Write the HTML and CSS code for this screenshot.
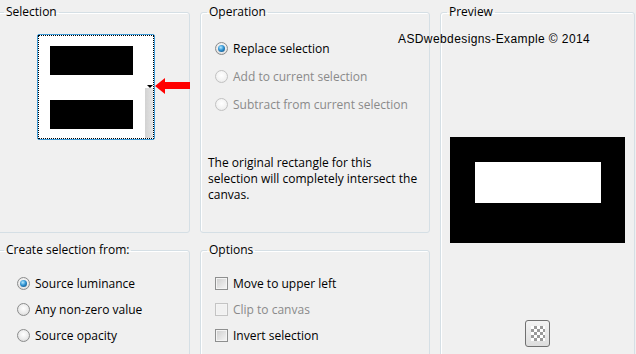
FILE: index.html
```html
<!DOCTYPE html>
<html lang="en">
<head>
    <meta charset="UTF-8">
    <title>Selection from mask</title>
    <link rel="stylesheet" href="styles.css">
</head>
<body>
    <div class="dialog">
        <fieldset class="group selection-group">
            <legend>Selection</legend>
            <div class="thumb">
                <div class="focus">
                    <div class="bars">
                        <div class="bar"></div>
                        <div class="bar"></div>
                    </div>
                    <div class="strip"></div>
                </div>
            </div>
        </fieldset>

        <fieldset class="group operation-group">
            <legend>Operation</legend>
            <div class="options wide">
                <label class="option"><span class="radio checked"></span>Replace selection</label>
                <label class="option disabled"><span class="radio"></span>Add to current selection</label>
                <label class="option disabled"><span class="radio"></span>Subtract from current selection</label>
            </div>
            <p class="note">The original rectangle for this selection will completely intersect the canvas.</p>
        </fieldset>

        <fieldset class="group preview-group">
            <legend>Preview</legend>
            <div class="preview">
                <div class="preview-hole"></div>
            </div>
            <button class="checker-button"><span class="checker"></span></button>
        </fieldset>

        <fieldset class="group source-group">
            <legend>Create selection from:</legend>
            <div class="options">
                <label class="option"><span class="radio checked"></span>Source luminance</label>
                <label class="option"><span class="radio"></span>Any non-zero value</label>
                <label class="option"><span class="radio"></span>Source opacity</label>
            </div>
        </fieldset>

        <fieldset class="group options-group">
            <legend>Options</legend>
            <div class="options">
                <label class="option"><span class="check"></span>Move to upper left</label>
                <label class="option disabled"><span class="check"></span>Clip to canvas</label>
                <label class="option"><span class="check"></span>Invert selection</label>
            </div>
        </fieldset>

        <div class="watermark">ASDwebdesigns-Example &copy; 2014</div>
        <svg class="arrow" width="36" height="17" viewBox="0 0 36 17">
            <polygon points="0,8 10,0 10,4 35,4 35,11 10,11 10,16" fill="#f00"/>
        </svg>
    </div>
</body>
</html>
```

FILE: styles.css
```css
html, body {
    height: 100%;
    overflow: hidden;
}
body {
    margin: 0;
    background-color: #f0f0f0;
    font-family: 'Open Sans', 'Noto Sans', sans-serif;
    font-size: 12px;
    color: #000000;
}
.dialog {
    position: relative;
    display: grid;
    grid-template-columns: 193px 230px 195px;
    grid-template-rows: 229px 140px;
    column-gap: 10px;
    row-gap: 9px;
    margin-left: -3px;
    padding-top: 4px;
}
.group {
    margin: 0;
    padding: 0;
    border: 1px solid #d5dfe5;
    border-radius: 3px;
    box-shadow: inset 1px 1px 0 #ffffff;
    min-width: 0;
}
.group legend {
    margin-left: 6px;
    padding: 0 2px 0 2px;
    line-height: 16px;
}
.preview-group {
    grid-row: 1 / 3;
    grid-column: 3;
    display: flex;
    flex-direction: column;
    align-items: center;
}

/* selection thumbnail */
.thumb {
    width: 118px;
    height: 106px;
    box-sizing: border-box;
    margin: 14px 0 0 39px;
    border: 1px solid #3d9ad6;
    border-radius: 2px;
    background-color: #ffffff;
}
.focus {
    height: 100%;
    box-sizing: border-box;
    border: 1px dotted #000000;
    display: flex;
    padding: 10px 0 0 11px;
}
.bars {
    display: flex;
    flex-direction: column;
    gap: 25px;
}
.bar {
    width: 83px;
    height: 29px;
    background-color: #000000;
}
.strip {
    position: relative;
    align-self: flex-end;
    margin-left: auto;
    width: 8px;
    height: 50px;
    background: linear-gradient(to right, #d2d2d2, #e4e4e4);
}
.strip::before {
    content: "";
    position: absolute;
    top: -3px;
    left: 2px;
    border-left: 3px solid transparent;
    border-right: 3px solid transparent;
    border-top: 3px solid #000000;
}
.arrow {
    position: absolute;
    left: 158px;
    top: 78px;
}

/* radio & check lists */
.options {
    display: flex;
    flex-direction: column;
    padding: 12px 0 0 14px;
}
.source-group .options {
    padding-left: 19px;
}
.options.wide {
    padding-top: 14px;
}
.option {
    display: flex;
    align-items: center;
    height: 26px;
}
.options.wide .option {
    height: 28px;
}
.option.disabled {
    color: #8a8a8a;
}
.radio {
    position: relative;
    width: 13px;
    height: 13px;
    box-sizing: border-box;
    margin-right: 5px;
    border: 1px solid #8b8c8c;
    border-radius: 50%;
    background: radial-gradient(circle at 50% 40%, #ffffff 0, #ebebeb 55%, #cfcfcf 100%);
}
.option.disabled .radio {
    border-color: #c2c2c2;
    background: radial-gradient(circle at 50% 40%, #ffffff 0, #f2f2f2 60%, #e2e2e2 100%);
}
.radio.checked::after {
    content: "";
    position: absolute;
    left: 2px;
    top: 2px;
    width: 7px;
    height: 7px;
    border-radius: 50%;
    background: radial-gradient(circle at 40% 35%, #b8eaff 0, #2f93d3 45%, #0b3f6d 100%);
}
.check {
    width: 13px;
    height: 13px;
    box-sizing: border-box;
    margin-right: 5px;
    border: 1px solid #8e8f8f;
    background: linear-gradient(135deg, #cdcdcd, #f6f6f6);
    box-shadow: inset 0 0 0 1px #f4f4f4;
}
.option.disabled .check {
    border-color: #c4c4c4;
    background: #f1f1f1;
}
.note {
    margin: 37px 0 0 7px;
    line-height: 16px;
    width: 214px;
}

/* preview */
.preview {
    margin-top: 117px;
    width: 175px;
    height: 106px;
    box-sizing: border-box;
    padding: 25px 24px 0 25px;
    background-color: #000000;
}
.preview-hole {
    height: 41px;
    background-color: #ffffff;
}
.checker-button {
    margin-top: 77px;
    width: 25px;
    height: 27px;
    padding: 0;
    border: 1px solid #707070;
    border-radius: 3px;
    background: linear-gradient(#f3f3f3, #dddddd);
    display: flex;
    align-items: center;
    justify-content: center;
}
.checker {
    width: 14px;
    height: 15px;
    background: repeating-conic-gradient(#9a9a9a 0 25%, #ffffff 0 50%) 0 0 / 6px 6px;
}
.watermark {
    position: absolute;
    left: 401px;
    top: 31px;
    font-family: 'Liberation Sans', Arial, sans-serif;
    font-size: 12px;
    letter-spacing: 0.4px;
    line-height: 16px;
}
```
